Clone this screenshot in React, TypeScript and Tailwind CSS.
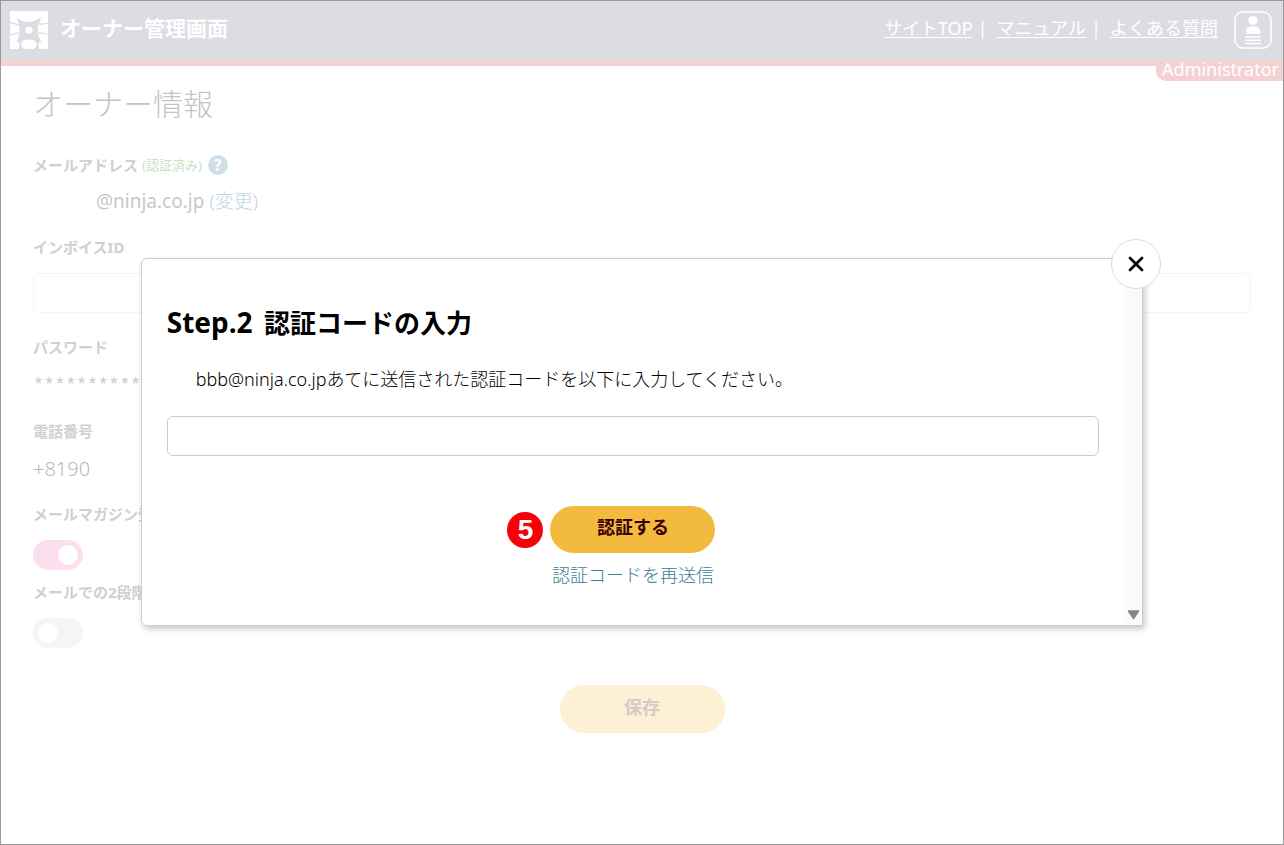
import React, { useState } from "react";

const navLinks = ["サイトTOP", "マニュアル", "よくある質問"];

function ShurikenLogo() {
  return (
    <svg viewBox="0 0 38 38" className="size-[38px] shrink-0" aria-hidden="true">
      <rect width="38" height="38" fill="#fff" />
      <path
        d="M6.500 6.500 C11 9.500 14 11 18.700 11 C23 11 26 9 31.500 6 C29.500 11 27.500 15 28 19.500 C28 24 29.500 27.500 31.500 32 C27 31 24 28.500 19 28.500 C14 28.500 11 31 6.500 31.500 C9 27 9.500 24 9.500 19.500 C9.500 15 8.500 11.500 6.500 6.500 Z"
        fill="#dcdde3"
      />
      <path
        d="M0 10.500 L8.500 13.500 L9 15 L0 12 Z M0 23.500 L9 21 L9 22.500 L0 24.500 Z M38 12 L29.500 12.500 L29 14 L38 13 Z M38 22.500 L29 21 L29 22.500 L38 23.500 Z M9 38 L9.500 30.500 L13.500 29 C11.500 31 11 33.500 11.500 35.500 L14 38 Z M29 38 L28.500 30.500 L24.500 29 C26.500 31 27 33.500 26.500 35.500 L24 38 Z"
        fill="#dcdde3"
      />
      <circle cx="19" cy="19" r="3.600" fill="#fff" />
    </svg>
  );
}

function ProfileIcon() {
  return (
    <svg viewBox="0 0 38 38" className="size-[38px]" aria-hidden="true">
      <rect x="1" y="1" width="36" height="36" rx="8" fill="none" stroke="#fff" strokeWidth="1.500" />
      <circle cx="19" cy="9.500" r="4.600" fill="#fff" />
      <path d="M12 20.500 C12 17 15 15.300 19 15.300 C23 15.300 26.500 17 26.500 20.500 C26.500 22.500 25.500 23 24 23 H14.500 C13 23 12 22.500 12 20.500 Z" fill="#fff" />
      <path d="M11 26 H27 M11 29.300 H27 M11 32.600 H27" stroke="#fff" strokeWidth="1.500" />
    </svg>
  );
}

function Toggle({ id, label, initial }: { id: string; label: string; initial: boolean }) {
  const [on, setOn] = useState(initial);
  return (
    <div className="mb-[10px]">
      <label htmlFor={id} className="block text-[15px] leading-6 font-bold">
        {label}
      </label>
      <span className="mt-[14px] grid h-[30px] w-[50px] items-center">
        <input
          id={id}
          type="checkbox"
          checked={on}
          onChange={(e) => setOn(e.target.checked)}
          className="col-start-1 row-start-1 h-full w-full appearance-none rounded-full bg-[#f5f5f5] checked:bg-[#fcdfee]"
        />
        <span
          className={
            on
              ? "pointer-events-none col-start-1 row-start-1 ml-[25px] size-5 rounded-full bg-white"
              : "pointer-events-none col-start-1 row-start-1 ml-[5px] size-5 rounded-full bg-white"
          }
        />
      </span>
    </div>
  );
}

function Header() {
  return (
    <header className="relative border-b-6 border-[#f4d2d4] bg-[#dcdde3] text-white">
      <div className="flex h-[59px] items-center justify-between pr-[11px] pb-[2px] pl-[9px]">
        <div className="flex items-center gap-3">
          <ShurikenLogo />
          <span className="pb-1 text-[21px] leading-8 font-bold">オーナー管理画面</span>
        </div>
        <div className="flex items-center gap-4">
          <nav className="flex items-center pb-1 text-[18px] leading-6">
            {navLinks.map((text, i) => (
              <React.Fragment key={text}>
                {i > 0 && <span className="mr-2 ml-1 w-3 text-center">|</span>}
                <a href="#" className="underline underline-offset-2">
                  {text}
                </a>
              </React.Fragment>
            ))}
          </nav>
          <a href="#" aria-label="プロフィール">
            <ProfileIcon />
          </a>
        </div>
      </div>
      <span className="absolute top-[60px] right-0 rounded-bl-[10px] bg-[#f4d2d4] pr-1 pb-1 pl-[6px] text-[18px] leading-4">
        Administrator
      </span>
    </header>
  );
}

function OwnerForm() {
  return (
    <main className="px-8 pt-[15px] text-[#d0d0d0]">
      <h1 className="text-[30px] leading-[46px] font-light text-[#c4c4c4]">オーナー情報</h1>

      <div className="mt-[26px] flex items-center text-[15px] leading-6 font-bold">
        <span>メールアドレス</span>
        <span className="ml-1 text-[13px] font-normal text-[#c9dfc0]">(認証済み)</span>
        <button
          type="button"
          aria-label="ヘルプ"
          className="ml-[6px] flex size-5 items-center justify-center rounded-full bg-[#cfdfe8] text-[16px] leading-5 text-white"
        >
          ?
        </button>
      </div>
      <p className="mt-3 pl-[63px] text-[19px] leading-6 text-[#c8c8c8]">
        @ninja.co.jp{" "}
        <a href="#" className="font-light text-[#c3d6e2]">
          (変更)
        </a>
      </p>

      <label htmlFor="invoice" className="mt-[22px] block text-[15px] leading-6 font-bold">
        インボイスID
      </label>
      <input id="invoice" type="text" className="mt-[14px] block h-10 w-full rounded-md border border-[#f4f4f4] px-3" />

      <h2 className="mt-[22px] text-[15px] leading-6 font-bold">パスワード</h2>
      <p className="mt-[14px] font-['Liberation_Mono',monospace] text-[18px] leading-6 text-[#c8c8c8]">************</p>

      <h2 className="mt-[22px] text-[15px] leading-6 font-bold">電話番号</h2>
      <p className="mt-[14px] mb-[21px] text-[20px] leading-6 font-light text-[#b8b8b8]">+8190</p>

      <Toggle id="magazine" label="メールマガジン受信" initial={true} />
      <Toggle id="two-step" label="メールでの2段階認証" initial={false} />

      <div className="mt-[37px] flex justify-center pb-10">
        <button
          type="button"
          className="h-12 w-[165px] rounded-full bg-[#fdf0d5] pb-1 text-[18px] font-bold text-[#d6c9c9]"
        >
          保存
        </button>
      </div>
    </main>
  );
}

function CodeDialog() {
  return (
    <div className="absolute inset-x-0 top-[257px] flex justify-center">
      <section
        role="dialog"
        aria-labelledby="dialog-title"
        className="relative flex w-[78.2%] rounded-l-md border border-[#cccccc] bg-white text-black shadow-[2px_3px_6px_rgba(0,0,0,0.22)]"
      >
        <div className="flex-1 px-[25px] pt-[43px] pb-9">
          <h2 id="dialog-title" className="text-[26px] leading-10 font-bold">
            <span className="mr-1 text-[28px]">Step.2 </span>認証コードの入力
          </h2>
          <label htmlFor="code" className="mt-[22px] block pl-[29px] text-[18px] leading-7 font-light">
            bbb@ninja.co.jpあてに送信された認証コードを以下に入力してください。
          </label>
          <input id="code" type="text" className="mt-[23px] block h-10 w-full rounded-md border border-[#cccccc] px-3" />
          <div className="mt-[50px] flex flex-col items-center">
            <div className="relative">
              <button
                type="button"
                className="block h-[47px] w-[165px] rounded-full bg-[#f2bb3e] pb-1 text-[18px] font-bold text-[#3c0008]"
              >
                認証する
              </button>
              <span className="absolute top-[6px] -left-[43px] flex size-9 items-center justify-center rounded-full bg-[#f60009] font-['Liberation_Sans',sans-serif] text-[28px] leading-9 font-bold text-white">
                5
              </span>
            </div>
            <a href="#" className="mt-2 text-[18px] leading-7 font-light text-[#3a7d90]">
              認証コードを再送信
            </a>
          </div>
        </div>
        <div className="flex w-[18px] flex-col items-center justify-end bg-[#fbfbfb] pb-[5px]">
          <svg viewBox="0 0 13 10" className="h-[10px] w-[13px]" aria-hidden="true">
            <path d="M1.500 1 H11.500 L6.500 8.500 Z" fill="#858585" stroke="#858585" strokeWidth="1.500" strokeLinejoin="round" />
          </svg>
        </div>
        <button
          type="button"
          aria-label="閉じる"
          className="absolute -top-5 -right-[19px] flex size-[50px] items-center justify-center rounded-full border border-[#dcdcdc] bg-white"
        >
          <svg viewBox="0 0 16 16" className="size-4" aria-hidden="true">
            <path d="M2 2 L14 14 M14 2 L2 14" stroke="#000" strokeWidth="2.800" strokeLinecap="round" />
          </svg>
        </button>
      </section>
    </div>
  );
}

export default function App() {
  return (
    <div className="relative min-h-screen border border-[#999999] bg-white font-['Noto_Sans','Noto_Sans_CJK_JP',sans-serif]">
      <Header />
      <OwnerForm />
      <CodeDialog />
    </div>
  );
}
